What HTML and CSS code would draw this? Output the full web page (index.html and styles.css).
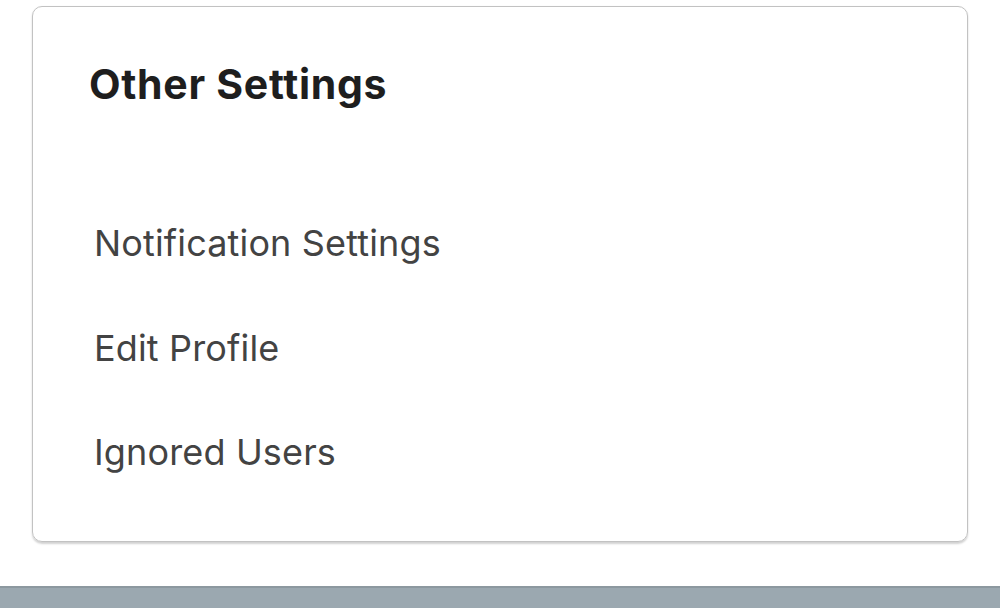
FILE: index.html
```html
<!DOCTYPE html>
<html>
<head>
<meta charset="utf-8">
<link rel="stylesheet" href="styles.css">
</head>
<body>
<div class="page">
  <section class="card">
    <h2 class="card-title">Other Settings</h2>
    <ul class="menu">
      <li class="menu-item">Notification Settings</li>
      <li class="menu-item">Edit Profile</li>
      <li class="menu-item">Ignored Users</li>
    </ul>
  </section>
</div>
<footer class="bottom-bar"></footer>
</body>
</html>
```

FILE: styles.css
```css
* { box-sizing: border-box; }
html, body { margin: 0; padding: 0; }
body {
  width: 1000px;
  height: 608px;
  overflow: hidden;
  background: #fff;
  font-family: Inter, "Noto Sans", sans-serif;
  display: flex;
  flex-direction: column;
}
.page {
  padding: 6px 32px 0 32px;
  height: 586px;
  flex: none;
}
.card {
  width: 936px;
  height: 536px;
  border: 1.5px solid #c2c2c2;
  border-radius: 10px;
  box-shadow: 0 1.5px 2px rgba(0,0,0,0.18);
  padding: 52px 0 0 56px;
  display: flex;
  flex-direction: column;
}
.card-title {
  margin: 0;
  font-size: 41px;
  font-weight: 700;
  color: #1e1e1e;
  line-height: 50px;
  letter-spacing: 0.7px;
}
.menu {
  list-style: none;
  margin: 82px 0 0 0;
  padding: 0 0 0 5px;
  display: flex;
  flex-direction: column;
}
.menu-item {
  font-size: 36px;
  color: #434343;
  line-height: 104px;
  height: 104.5px;
  letter-spacing: 0.15px;
}
.bottom-bar {
  flex: 1;
  background: #9ba8b0;
  border-top: 2px solid #8c989f;
}
```
